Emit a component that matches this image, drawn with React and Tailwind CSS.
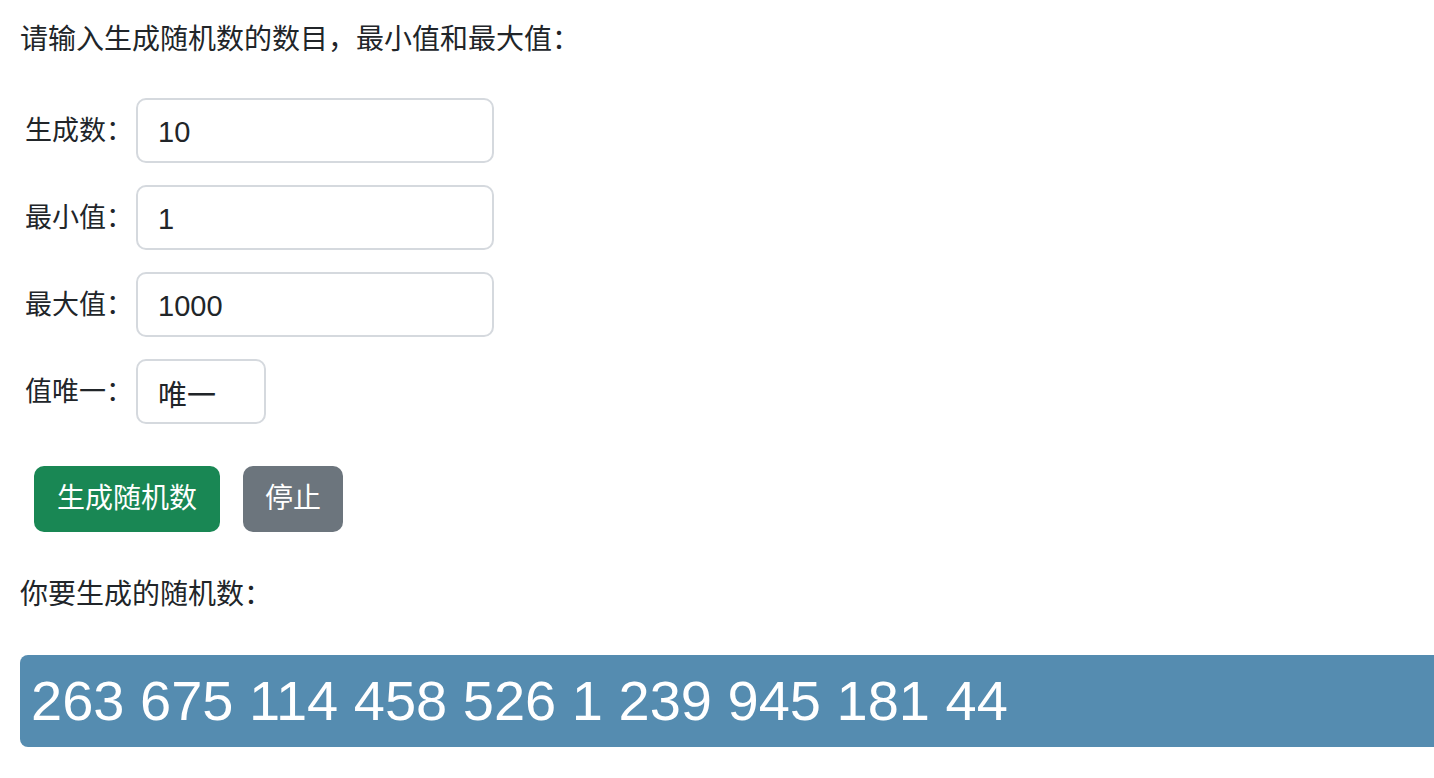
import { useState } from "react";

const FONT = "font-['Liberation_Sans','Noto_Sans_CJK_SC',sans-serif]";

const FIELDS = [
  { label: "生成数：", value: "10", wide: true },
  { label: "最小值：", value: "1", wide: true },
  { label: "最大值：", value: "1000", wide: true },
  { label: "值唯一：", value: "唯一", wide: false },
];

export default function App() {
  const [nums] = useState([263, 675, 114, 458, 526, 1, 239, 945, 181, 44]);

  return (
    <div className={`${FONT} min-h-[778px] w-full overflow-hidden bg-white pl-[20px] text-[#212529]`}>
      <p className="pt-[20px] text-[28px] leading-[40px]">请输入生成随机数的数目，最小值和最大值：</p>

      <div className="mt-[38px] flex flex-col gap-[22px]">
        {FIELDS.map((f) => (
          <div key={f.label} className="flex items-center">
            <span className="w-[116px] pl-[5px] text-[27px] leading-[36px]">{f.label}</span>
            <input
              readOnly
              value={f.value}
              className={`${f.wide ? "w-[358px]" : "w-[130px]"} h-[65px] rounded-[10px] border-2 border-[#d5d9de] bg-white pt-[3px] px-[20px] text-[29px] text-[#212529] outline-none`}
            />
          </div>
        ))}
      </div>

      <div className="mt-[42px] flex gap-[23px] pl-[14px]">
        <button className="h-[66px] rounded-[10px] bg-[#198754] px-[23px] text-[28px] text-white">
          生成随机数
        </button>
        <button className="h-[66px] rounded-[10px] bg-[#6c757d] px-[22px] text-[28px] text-white">
          停止
        </button>
      </div>

      <p className="mt-[43px] text-[28px] leading-[40px]">你要生成的随机数：</p>

      <div className="mt-[40px] flex h-[92px] items-center rounded-l-[8px] bg-[#558cb0] pl-[11px] text-[56px] leading-none text-white">
        {nums.join(" ")}
      </div>
    </div>
  );
}
